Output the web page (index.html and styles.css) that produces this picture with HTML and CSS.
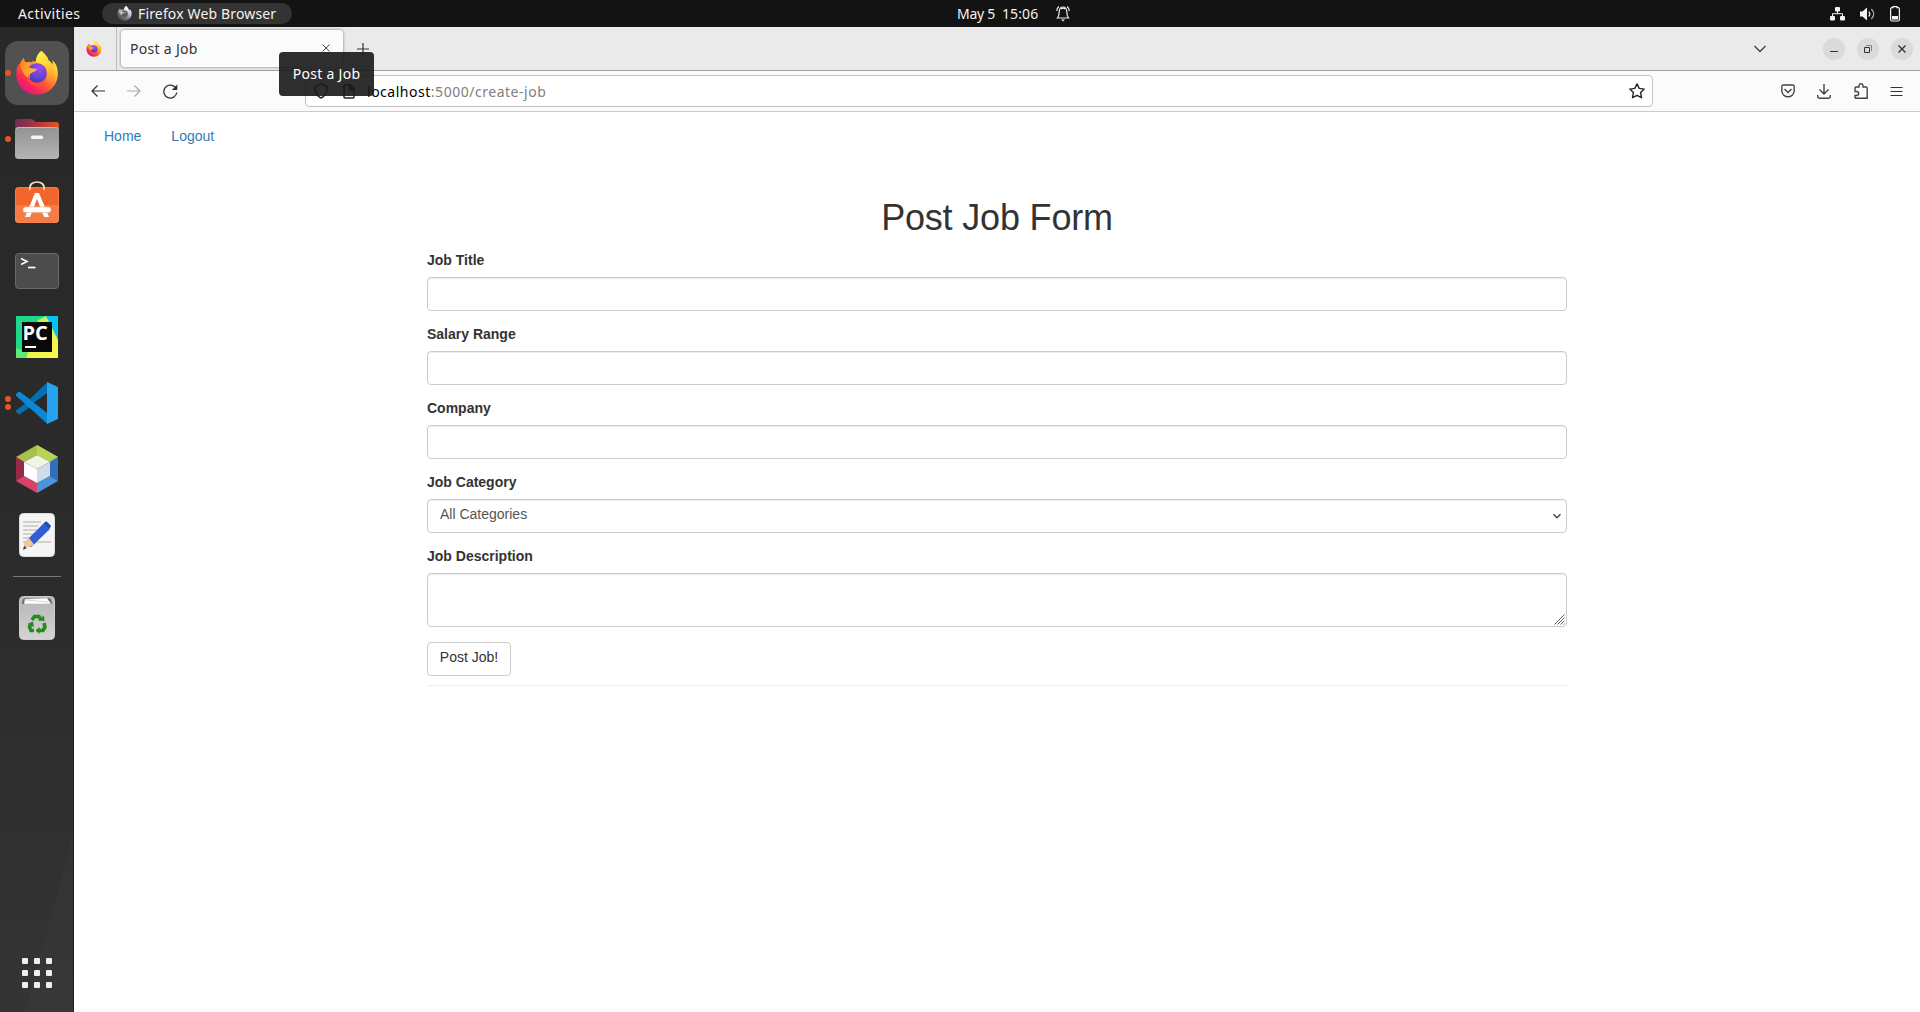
FILE: index.html
```html
<!DOCTYPE html>
<html lang="en">
<head>
<meta charset="utf-8">
<title>Post a Job</title>
<link rel="stylesheet" href="styles.css">
</head>
<body>
<svg class="defs" width="0" height="0" aria-hidden="true">
  <defs>
    <linearGradient id="fxBody" x1=".85" y1=".1" x2=".2" y2=".95"><stop offset="0" stop-color="#fff04a"/><stop offset=".3" stop-color="#ffb52c"/><stop offset=".58" stop-color="#ff5b35"/><stop offset=".82" stop-color="#f9245a"/><stop offset="1" stop-color="#e3158b"/></linearGradient>
    <linearGradient id="fxFlame" x1="0" y1="0" x2=".3" y2="1"><stop offset="0" stop-color="#fff44f"/><stop offset=".5" stop-color="#ffd83c"/><stop offset="1" stop-color="#ff9a2e" stop-opacity=".2"/></linearGradient>
    <radialGradient id="fxGlobe" cx=".6" cy=".25" r=".8"><stop offset="0" stop-color="#a94af5"/><stop offset=".55" stop-color="#6a45dc"/><stop offset="1" stop-color="#4338a8"/></radialGradient>
    <linearGradient id="fxFace" x1="0" y1="0" x2="1" y2=".6"><stop offset="0" stop-color="#ff7c20"/><stop offset="1" stop-color="#ffbd35"/></linearGradient>
    <symbol id="firefox" viewBox="0 0 42 44">
      <path d="M25.500 0C29 3 31.500 5.500 32.500 9.500C34.500 10.500 36 12 36.500 14C37 12.500 36.700 10 36.300 9C39.500 12 42 16 41.900 23C41.500 35 32.500 43.500 21 43.500C9 43.500 .3 34.500.3 23C.3 18 1.500 14.500 3 12.500L3.200 15C4 11.500 6 8.500 8 7C8 9.500 8.500 10.500 10 11.500C12 10.800 13.500 10.800 14.500 11.200C16 11 18 10 20 10.500C20 6 22.500 2 25.500 0Z" fill="url(#fxBody)"/>
      <path d="M25.500 0C30 4 31.500 6 32.500 9.500C38 13 38.500 19 36.500 25C35 30 31 33 27 33C32 28 32.500 20 28 15C25 12 21.500 12 20 10.500C20 6 22.500 2 25.500 0Z" fill="url(#fxFlame)"/>
      <circle cx="21" cy="22" r="9.800" fill="url(#fxGlobe)"/>
      <path d="M4 14C5.500 10 6.500 8.500 8 7C8 9.500 8.500 10.500 10 11.500C12 10.800 13.500 11 15 12C13.500 13.500 13 15 13 16.500C15 17.500 19 17.500 20.800 18C20.500 20 18 20.500 15.500 22C13.500 23 13 25 14 27C10 27 6 21 4 14Z" fill="url(#fxFace)"/>
      <path d="M12.500 22C12 28 16 32 21.500 32C26 32 29 30 31 26C30 33 24 37 18 35C13 33 11 28 12.500 22Z" fill="#ff4a40" opacity=".8"/>
    </symbol>
  </defs>
</svg>

<header class="topbar">
  <div class="topbar-left">
    <span class="activities">Activities</span>
    <div class="app-pill">
      <svg class="mono" width="15" height="15"><use href="#firefox"/></svg>
      <span class="app-name">Firefox Web Browser</span>
    </div>
  </div>
  <div class="clock">
    <span class="date">May 5</span><span class="time">15:06</span>
    <svg width="14" height="17" viewBox="0 0 14 17" fill="none" stroke="#eee" stroke-width="1.200"><path d="M1.500 13C3 11.500 3 9 3.200 6.500C3.500 3.500 5 2 7 2C9 2 10.500 3.500 10.800 6.500C11 9 11 11.500 12.500 13ZM3 1.500C1.500 2.500.8 4 .7 6M11 1.500C12.500 2.500 13.200 4 13.300 6M5 4C6 3 8 3 9 4"/><path d="M5 14.500H9L7 16.500Z" fill="#eee" stroke="none"/></svg>
  </div>
  <div class="status">
    <svg width="15" height="14" viewBox="0 0 15 14" fill="#f4f4f4"><rect x="5" width="5" height="4.500" rx="1"/><rect y="9" width="5" height="4.500" rx="1"/><rect x="10" y="9" width="5" height="4.500" rx="1"/><path d="M7.500 4V7M2.500 9.500V6.700H12.500V9.500" fill="none" stroke="#f4f4f4"/></svg>
    <svg width="15" height="14" viewBox="0 0 15 14" fill="none" stroke="#f4f4f4" stroke-width="1.200"><path d="M0 4.500H2.500L7 .5V13.500L2.500 9.500H0Z" fill="#f4f4f4" stroke="none"/><path d="M8.800 4.500C10 6 10 8 8.800 9.500"/><path d="M11.300 2C14.500 5 14.500 9 11.300 12" opacity=".7"/></svg>
    <svg width="10" height="16" viewBox="0 0 10 16" fill="none" stroke="#f4f4f4" stroke-width="1.200"><path d="M3 1.600V.6H7V1.600H8.200Q9.400 1.600 9.400 3V13.500Q9.400 15 8 15H2Q.6 15 .6 13.500V3Q.6 1.600 2 1.600Z"/><rect x="2" y="10" width="6" height="3.500" fill="#f4f4f4" stroke="none"/></svg>
  </div>
</header>

<div class="desktop">
  <nav class="dock">
    <div class="dock-item active"><i class="dots"><b></b></i>
      <svg width="42" height="44"><use href="#firefox"/></svg>
    </div>
    <div class="dock-item"><i class="dots"><b></b></i>
      <svg width="48" height="48" viewBox="0 0 48 48"><defs><linearGradient id="fold"><stop stop-color="#722c50"/><stop offset=".45" stop-color="#a43545"/><stop offset="1" stop-color="#e95420"/></linearGradient><linearGradient id="foldFront" x1="0" y1="0" x2="0" y2="1"><stop stop-color="#929292"/><stop offset="1" stop-color="#b5b5b5"/></linearGradient></defs><path d="M2 7Q2 4 5 4H18Q20 4 21 5.500L22.500 7H43Q46 7 46 10V20H2Z" fill="url(#fold)"/><rect x="2" y="12" width="44" height="32" rx="3.500" fill="url(#foldFront)"/><path d="M3 14Q3.500 12.500 5.500 12.500H42.500Q44.500 12.500 45 14" fill="none" stroke="#bdbdbd"/><rect x="18" y="20.500" width="12" height="3.500" rx="1.500" fill="#f6f6f6"/></svg>
    </div>
    <div class="dock-item">
      <svg width="48" height="48" viewBox="0 0 48 48"><rect x="2" y="6" width="44" height="36" rx="4" fill="#f2652d"/><path d="M2 24H46V38Q46 42 42 42H6Q2 42 2 38Z" fill="#f27d48"/><rect x="2.500" y="6.500" width="43" height="35" rx="3.500" fill="none" stroke="#ff8a4d" opacity=".6"/><path d="M17 9C16 3 20 1 24 1S32 3 31 9" fill="none" stroke="#f4dfaf" stroke-width="1.700"/><path d="M22 12H26L36 36H31L24 18L17 36H12Z" fill="#fff"/><rect x="10" y="26" width="28" height="5.500" rx="2.500" fill="#fff" stroke="#f0a583" stroke-width=".5"/></svg>
    </div>
    <div class="dock-item">
      <svg width="48" height="48" viewBox="0 0 48 48"><rect x="2.500" y="6.500" width="43" height="35" rx="3" fill="#4c4c4c" stroke="#696969"/><path d="M8 11.500L14 14.500L8 17.500" fill="none" stroke="#fff" stroke-width="1.600"/><path d="M15 20.500H22.500" stroke="#fff" stroke-width="1.700"/></svg>
    </div>
    <div class="dock-item">
      <div class="pycharm"><svg width="42" height="42" viewBox="0 0 42 42"><defs><linearGradient id="pyY" x1="0" y1="0" x2="1" y2="1"><stop stop-color="#7bea70"/><stop offset=".5" stop-color="#e8f64f"/><stop offset="1" stop-color="#fcf84a"/></linearGradient></defs><path d="M0 0H42V42H0Z" fill="#21d789"/><path d="M30 0H42V25L32 8Z" fill="#07c3f2"/><path d="M22 4L30 0L42 24V42H10Z" fill="url(#pyY)"/><path d="M0 32L12 36L10 42H0Z" fill="#5fe977"/><rect x="6" y="6" width="30" height="30" fill="#090909"/><rect x="9" y="30" width="11" height="2" fill="#fff"/></svg><span>PC</span></div>
    </div>
    <div class="dock-item"><i class="dots"><b></b><b></b></i>
      <svg width="42" height="42" viewBox="0 0 42 42"><path d="M31 .5L14 17L4 10Q3 9.500 2 10.200L.3 12Q-.3 13 .5 14L10 21L.5 28Q-.3 29 .3 30L2 31.800Q3 32.500 4 32L14 25L31 41.500V31L17.500 21L31 11Z" fill="#0071b7"/><path d="M4 10L31 31V41.500L.5 14Q-.3 13 .3 12L2 10.200Q3 9.500 4 10Z" fill="#0a88d6"/><path d="M31 0L41 4.500Q42 5 42 6V36Q42 37 41 37.500L31 42Z" fill="#28a2ee"/></svg>
    </div>
    <div class="dock-item">
      <svg width="42" height="48" viewBox="0 0 42 48"><path d="M21 0L42 12L34 17L21 10L8 17L0 12Z" fill="#a9c14a"/><path d="M21 0L42 12L34 17L21 10Z" fill="#b8d25a"/><path d="M0 12L8 17V31L0 36Z" fill="#952b46"/><path d="M0 36L8 31L21 38V48Z" fill="#d84467"/><path d="M42 12L34 17V31L42 36Z" fill="#316fbd"/><path d="M42 36L34 31L21 38V48Z" fill="#4b94df"/><path d="M21 10L34 17L21 24L8 17Z" fill="#f0f4e3"/><path d="M8 17L21 24V38L8 31Z" fill="#fff"/><path d="M34 17L21 24V38L34 31Z" fill="#d0dce7"/></svg>
    </div>
    <div class="dock-item">
      <svg width="48" height="48" viewBox="0 0 48 48"><rect x="6.500" y="2.500" width="35" height="43" rx="4" fill="#f4f4f4" stroke="#ddd"/><path d="M10 11H28M10 15H25M10 19H24M10 23H20M10 27H18M10 31H38" stroke="#c7c3b6" stroke-width="1.700"/><path d="M11.500 32L31 12L37 18L18 36Z" fill="#3465dd"/><path d="M16 27L33 10.500Q34 10 38 15.500L21 33.500Z" fill="#2f5dd5"/><path d="M31 12L33 10.500L38 15L36 17.500Z" fill="#244bad"/><path d="M11.500 32L16 27L21 33.500L10 38.500Z" fill="#fac38b"/><path d="M11.200 35L10 38.800L13.500 37.200Z" fill="#333"/></svg>
    </div>
    <div class="dock-sep"></div>
    <div class="dock-item">
      <svg width="48" height="48" viewBox="0 0 48 48"><defs><linearGradient id="bin" x1="0" y1="0" x2="0" y2="1"><stop stop-color="#b5b5b5"/><stop offset="1" stop-color="#d4d4d4"/></linearGradient></defs><rect x="6.500" y="2.500" width="35" height="43" rx="4" fill="url(#bin)" stroke="#ccc"/><path d="M9 10Q9 4 13 4H35Q39 4 39 10Z" fill="#666"/><path d="M11 10L12 5L34 4L38 10Z" fill="#fff" stroke="#bbb" stroke-width=".6"/><path d="M13 6L35 8" stroke="#bbb" stroke-width=".6"/><g fill="none" stroke="#238c1c" stroke-width="3.600"><path d="M19 26L21.500 22.500H26L28 25.500"/><path d="M31 29L32 33L30 36.500H26"/><path d="M21 36.500H18L16.500 33L18 29.500"/></g><g fill="#238c1c"><path d="M25 26.500L31.500 27L31 21.500Z"/><path d="M26.500 33V40L22.500 36.500Z"/><path d="M14.500 30L20 27.500L21 33Z"/></g></svg>
    </div>
    <div class="app-grid"><b></b><b></b><b></b><b></b><b></b><b></b><b></b><b></b><b></b></div>
  </nav>

  <section class="browser">
    <div class="tabs">
      <div class="pinned"><svg width="16" height="16"><use href="#firefox"/></svg></div>
      <div class="tab"><span class="tab-title">Post a Job</span>
        <svg width="8" height="8" viewBox="0 0 8 8" stroke="#444"><path d="M.5.5L7.500 7.500M7.500.5L.5 7.500"/></svg>
      </div>
      <svg class="plus" width="12" height="12" viewBox="0 0 12 12" stroke="#333" stroke-width="1.200"><path d="M6 0V12M0 6H12"/></svg>
      <div class="window-controls">
        <svg class="all-tabs" width="14" height="8" viewBox="0 0 14 8" fill="none" stroke="#444" stroke-width="1.400"><path d="M1.500 1L7 6.500L12.500 1"/></svg>
        <span class="wbtn"><svg width="10" height="10" stroke="#333"><path d="M1 7.500H9"/></svg></span>
        <span class="wbtn"><svg width="10" height="10" fill="none" stroke="#333"><path d="M1.500 3.500H6.500V8.500H1.500Z"/><path d="M3 1.500H8.500V7" stroke="#888"/></svg></span>
        <span class="wbtn"><svg width="10" height="10" stroke="#333" stroke-width="1.400"><path d="M1.500 1.500L8.500 8.500M8.500 1.500L1.500 8.500"/></svg></span>
      </div>
    </div>
    <div class="toolbar">
      <div class="nav-buttons">
        <svg width="14" height="14" viewBox="0 0 14 14" fill="none" stroke="#333" stroke-width="1.200"><path d="M14 7H1M6.500 1.500L1 7L6.500 12.500"/></svg>
        <svg width="14" height="14" viewBox="0 0 14 14" fill="none" stroke="#aaa" stroke-width="1.200"><path d="M0 7H13M7.500 1.500L13 7L7.500 12.500"/></svg>
        <svg width="15" height="15" viewBox="0 0 15 15" fill="none" stroke="#333" stroke-width="1.300"><path d="M13.800 8.500A6.500 6.500 0 1 1 11.800 2.800L13 4"/><path d="M14.300 .5V6H8.800Z" fill="#333" stroke="none"/></svg>
      </div>
      <div class="urlbar">
        <svg width="14" height="16" viewBox="0 0 14 16" fill="none" stroke="#222" stroke-width="1.500"><path d="M7 1L13 3.500C13.300 8.500 11 13 7 15C3 13 .7 8.500 1 3.500Z"/></svg>
        <svg width="12" height="15" viewBox="0 0 12 15" fill="none" stroke="#222" stroke-width="1.500"><path d="M1 2Q1 1 2 1H7L11 5V13Q11 14 10 14H2Q1 14 1 13Z"/><path d="M6.500 1V5.500H11Z" fill="#222"/></svg>
        <span class="url"><em>localhost</em>:5000/create-job</span>
        <svg class="star" width="16" height="16" viewBox="0 0 16 16" fill="none" stroke="#222" stroke-width="1.400" stroke-linejoin="round"><path d="M8 .9L10.200 5.400L15.200 6.100L11.600 9.600L12.500 14.700L8 12.300L3.500 14.700L4.400 9.600L.8 6.100L5.800 5.400Z"/></svg>
      </div>
      <div class="tools">
        <svg width="14" height="14" viewBox="0 0 14 14" fill="none" stroke="#444" stroke-width="1.400"><path d="M.8 2.500Q.8 1 2.300 1H11.700Q13.200 1 13.200 2.500V6.500C13.200 10.500 10 12.800 7 12.800S.8 10.500.8 6.500Z"/><path d="M3.500 5L7 8.500L10.500 5"/></svg>
        <svg width="14" height="15" viewBox="0 0 14 15" fill="none" stroke="#444" stroke-width="1.400"><path d="M7 0V9.500M2.500 5.500L7 10L11.500 5.500M.7 11V12.500Q.7 14.200 2.300 14.200H11.700Q13.300 14.200 13.300 12.500V11"/></svg>
        <svg width="14" height="16" viewBox="0 0 14 16" fill="none" stroke="#444" stroke-width="1.400"><path d="M5 4V2.500Q5.300.7 7 .7T9 2.500V4H12Q13.200 4 13.200 5.200V15.200H2.200Q1 15.200 1 14V12.500H3Q4.800 12 4.800 10.500T3 8.500H1V5.200Q1 4 2.200 4Z"/></svg>
        <svg width="13" height="11" viewBox="0 0 13 11" stroke="#333" stroke-width="1"><path d="M.5 1.500H12.500M.5 5.500H12.500M.5 9.500H12.500"/></svg>
      </div>
      <div class="tooltip"><span>Post a Job</span></div>
    </div>
    <main class="page">
      <nav class="site-nav"><a>Home</a><a>Logout</a></nav>
      <form class="job-form">
        <h2>Post Job Form</h2>
        <label>Job Title</label><div class="control"></div>
        <label>Salary Range</label><div class="control"></div>
        <label>Company</label><div class="control"></div>
        <label>Job Category</label>
        <div class="control select"><span>All Categories</span><svg width="8" height="6" viewBox="0 0 8 6" fill="none" stroke="#444" stroke-width="1.500"><path d="M.5 1.200L4 4.700L7.500 1.200"/></svg></div>
        <label>Job Description</label>
        <div class="control area"><svg width="11" height="11" viewBox="0 0 11 11" stroke="#666"><path d="M.5 10.500L10.500.5M3.500 10.500L10.500 3.500M6.500 10.500L10.500 6.500M9.500 10.500L10.500 9.500"/></svg></div>
        <button type="button" class="btn">Post Job!</button>
        <hr>
      </form>
    </main>
  </section>
</div>
</body>
</html>
```

FILE: styles.css
```css
* { box-sizing: border-box; }
body {
  margin: 0;
  width: 1920px;
  height: 1012px;
  overflow: hidden;
  display: flex;
  flex-direction: column;
  background: #fff;
  font-family: "Noto Sans", sans-serif;
  font-size: 14px;
}
svg { display: block; flex: none; }
.defs { position: absolute; }

/* GNOME top bar */
.topbar {
  height: 27px;
  flex: none;
  background: #131313;
  color: #f2f2f2;
  display: grid;
  grid-template-columns: 957px 1fr auto;
  align-items: center;
  white-space: nowrap;
}
.topbar span { padding-bottom: 1px; }
.topbar-left { display: flex; align-items: center; padding-left: 18px; }
.activities { width: 84px; letter-spacing: 0.4px; }
.app-pill {
  display: flex;
  align-items: center;
  gap: 6px;
  width: 190px;
  height: 21px;
  padding-left: 15px;
  border-radius: 11px;
  background: #333;
}
.mono { filter: grayscale(1) brightness(1.1); }
.app-name { letter-spacing: 0.15px; }
.clock { display: flex; align-items: center; }
.date { width: 45px; letter-spacing: -0.3px; }
.time { width: 54px; letter-spacing: 0.1px; }
.status { display: flex; align-items: center; gap: 15px; padding-right: 20px; }

.desktop { flex: 1; display: flex; min-height: 0; }

/* Dock */
.dock {
  width: 74px;
  flex: none;
  display: flex;
  flex-direction: column;
  align-items: center;
  gap: 2px;
  padding: 14px 0 24px;
  border-right: 1px solid #1d1d1d;
  background: linear-gradient(105deg, transparent 0 62%, rgba(255,255,255,.015) 62%) 0 100% / 74px 200px no-repeat, linear-gradient(#282828, #2b2b2b 55%, #343434);
}
.dock-item {
  position: relative;
  width: 64px;
  height: 64px;
  flex: none;
  display: flex;
  align-items: center;
  justify-content: center;
  border-radius: 13px;
}
.dock-item.active { background: #515151; }
.dots {
  position: absolute;
  left: 0;
  top: 0;
  bottom: 0;
  display: flex;
  flex-direction: column;
  justify-content: center;
  gap: 2.500px;
}
.dots b { width: 6px; height: 6px; border-radius: 50%; background: #e95420; }
.dock-sep { width: 48px; height: 1px; flex: none; background: #777; margin: 7px 0 7px; }
.pycharm { position: relative; }
.pycharm span {
  position: absolute;
  left: 7px;
  top: 6px;
  color: #fff;
  font: bold 20px/22px "Open Sans", sans-serif;
}
.app-grid {
  margin-top: auto;
  display: grid;
  grid-template-columns: repeat(3, 6px);
  gap: 6px;
}
.app-grid b { height: 6px; border-radius: 1px; background: #eee; }

/* Browser chrome */
.browser { flex: 1; display: flex; flex-direction: column; min-width: 0; }
.tabs {
  height: 44px;
  flex: none;
  display: flex;
  align-items: center;
  background: #eaeaea;
  border-bottom: 1px solid #9f9f9f;
}
.pinned {
  width: 43px;
  height: 100%;
  display: flex;
  align-items: center;
  padding-left: 12px;
  border-right: 1px solid #bcbcbc;
}
.tab {
  width: 222px;
  height: 37px;
  margin: 0 0 0 4px;
  padding: 0 13px 0 9px;
  display: flex;
  align-items: center;
  justify-content: space-between;
  border-radius: 4px;
  background: #fbfbfb;
  box-shadow: 0 0 3px rgba(0,0,0,.5);
  color: #333;
}
.tab-title, .tooltip span { letter-spacing: 0.3px; }
.tab svg { margin-bottom: 1px; }
.plus { margin-left: 14px; }
.window-controls { margin-left: auto; display: flex; align-items: center; gap: 12px; padding-right: 7px; }
.all-tabs { margin-right: 44px; }
.wbtn {
  width: 22px;
  height: 22px;
  border-radius: 50%;
  background: #dadada;
  display: flex;
  align-items: center;
  justify-content: center;
}
.toolbar {
  position: relative;
  height: 41px;
  flex: none;
  display: flex;
  align-items: center;
  background: #fbfbfb;
  border-bottom: 1px solid #ccc;
}
.nav-buttons { width: 231px; padding-left: 17px; display: flex; align-items: center; gap: 22px; }
.urlbar {
  width: 1348px;
  height: 32px;
  display: flex;
  align-items: center;
  padding: 0 7px 0 8px;
  border: 1px solid #c2c2c2;
  border-radius: 4px;
  background: #fff;
}
.urlbar svg + svg { margin-left: 15px; }
.url { margin-left: 12px; color: #808080; letter-spacing: 0.52px; }
.url em { font-style: normal; color: #000; }
.urlbar .star { margin-left: auto; }
.tools { flex: 1; display: flex; align-items: center; justify-content: space-between; padding: 0 17px 0 128px; }
.tooltip {
  position: absolute;
  left: 205px;
  top: -19px;
  width: 95px;
  height: 44px;
  padding-bottom: 2px;
  display: flex;
  align-items: center;
  justify-content: center;
  border-radius: 4px;
  background: rgba(24,24,24,.9);
  color: #fff;
  white-space: nowrap;
}

/* Page */
.page {
  flex: 1;
  background: #fff;
  color: #333;
  font: 14px/20px "Liberation Sans", Arial, sans-serif;
}
.site-nav { display: flex; gap: 30px; padding: 14px 30px 0; height: 66px; color: #337ab7; }
.job-form { width: 1140px; margin: 0 auto; display: flex; flex-direction: column; }
h2 { margin: 20px 0 12px; font-size: 36px; font-weight: 400; line-height: 40px; letter-spacing: -0.18px; text-align: center; }
label { height: 20px; margin-bottom: 7px; font-weight: 700; }
.control {
  height: 34px;
  margin-bottom: 13px;
  border: 1px solid #ccc;
  border-radius: 4px;
  box-shadow: inset 0 1px 1px rgba(0,0,0,.075);
  color: #555;
}
.select { display: flex; justify-content: space-between; align-items: center; padding: 0 5px 0 12px; }
.select span { margin-bottom: 5px; }
.area { height: 54px; margin-bottom: 15px; display: flex; align-items: flex-end; justify-content: flex-end; padding: 1px; }
.btn {
  width: 84px;
  height: 34px;
  padding: 0 0 4px;
  border: 1px solid #ccc;
  border-radius: 4px;
  background: #fff;
  color: #333;
  font: inherit;
}
hr { width: 100%; margin: 9px 0 0; border: 0; border-top: 1px solid #eee; }
```
